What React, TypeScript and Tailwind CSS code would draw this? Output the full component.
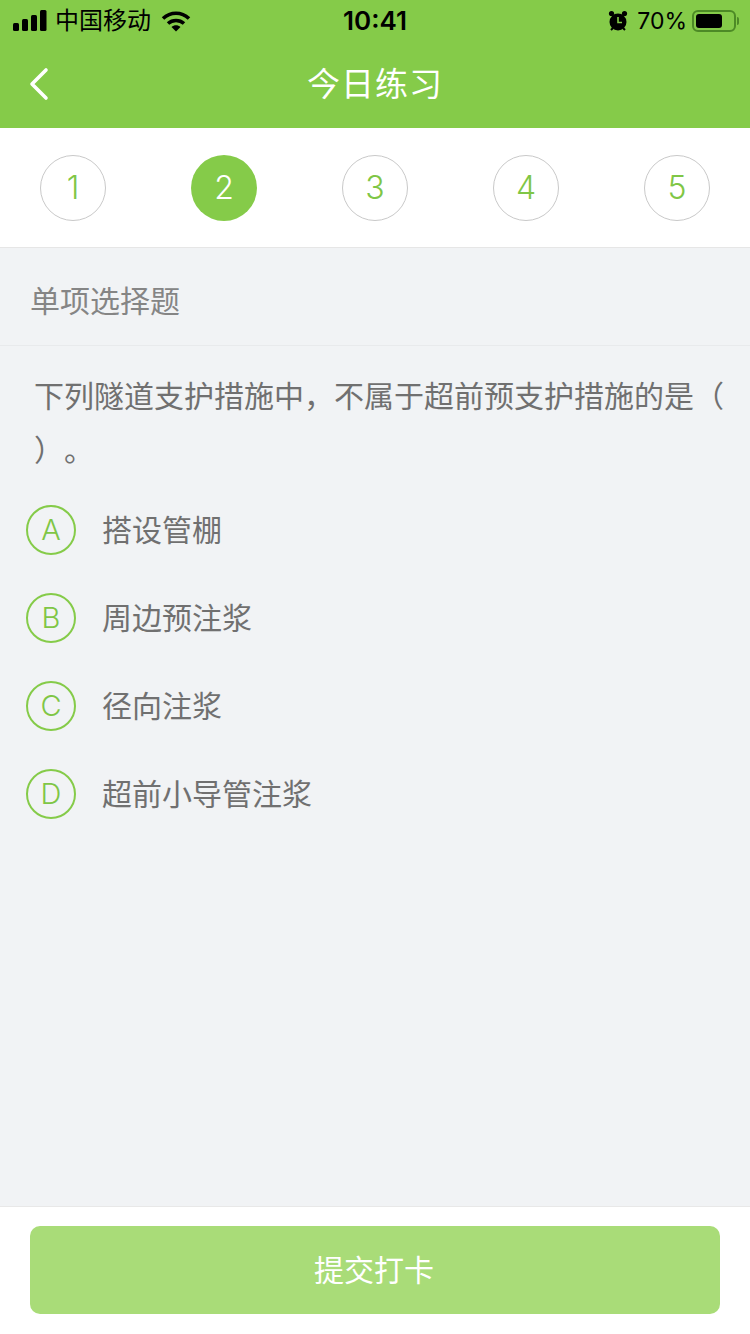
const font = "font-['Inter','Noto_Sans_CJK_SC',sans-serif]";
const steps = [1, 2, 3, 4, 5];
const options = [
  { key: "A", text: "搭设管棚" },
  { key: "B", text: "周边预注浆" },
  { key: "C", text: "径向注浆" },
  { key: "D", text: "超前小导管注浆" },
];

function StatusBar() {
  return (
    <div className="h-[40px] flex items-center justify-between pl-[13px] pr-[11px] pt-[2px] text-black">
      <div className="flex items-center w-[280px]">
        <svg width="34" height="22" viewBox="0 0 34 22" fill="#000">
          <rect x="0" y="13" width="6" height="8" rx="1.5" />
          <rect x="9" y="9" width="6" height="12" rx="1.5" />
          <rect x="18" y="5" width="6" height="16" rx="1.5" />
          <rect x="27" y="0" width="6.5" height="21" rx="1.5" />
        </svg>
        <span className="ml-[8px] text-[24px] leading-none">中国移动</span>
        <svg className="ml-[10px]" width="30" height="22" viewBox="0 0 30 22" fill="none">
          <path d="M2 8.5C9.5 1.5 20.5 1.5 28 8.5" stroke="#000" strokeWidth="3.6" />
          <path d="M7 13.5C11.5 9.5 18.5 9.5 23 13.5" stroke="#000" strokeWidth="3.6" />
          <path d="M10.5 17L15 21.5L19.5 17C17 14.6 13 14.6 10.5 17Z" fill="#000" />
        </svg>
      </div>
      <span className="text-[26px] leading-none font-semibold -ml-[1px] mr-[1px]">10:41</span>
      <div className="flex items-center justify-end w-[280px]">
        <svg width="20" height="22" viewBox="0 0 20 22" fill="#000">
          <circle cx="10" cy="12" r="8.5" />
          <circle cx="3.5" cy="3.5" r="2.6" />
          <circle cx="16.5" cy="3.5" r="2.6" />
          <path d="M10 7V12.5H14" stroke="#85cb49" strokeWidth="1.6" fill="none" />
          <path d="M3 20L5 18M17 20L15 18" stroke="#000" strokeWidth="2" />
        </svg>
        <span className="ml-[9px] text-[23px] leading-none">70%</span>
        <div className="ml-[5px] flex items-center">
          <div className="w-[44px] h-[22px] rounded-[6px] border-2 border-[#4d8a26] p-[2px]">
            <div className="w-[26px] h-full rounded-[3px] bg-black" />
          </div>
          <div className="ml-[1px] w-[2px] h-[8px] rounded-r-sm bg-[#4d8a26]" />
        </div>
      </div>
    </div>
  );
}

export default function App() {
  return (
    <div className={`w-[750px] h-[1334px] flex flex-col bg-[#f1f3f5] ${font}`}>
      <div className="bg-[#85cb49]">
        <StatusBar />
        <div className="relative h-[88px] flex items-center justify-center">
          <svg className="absolute left-[28px] top-[27px]" width="22" height="34" viewBox="0 0 22 34" fill="none">
            <path d="M18 3L4 17L18 31" stroke="#fff" strokeWidth="3.6" strokeLinecap="round" strokeLinejoin="round" />
          </svg>
          <span className="text-[33px] tracking-[1px] text-white leading-none">今日练习</span>
        </div>
      </div>

      <div className="h-[120px] bg-white border-b border-[#e6e6e6] flex items-start justify-between px-[40px] pt-[27px]">
        {steps.map((n) =>
          n === 2 ? (
            <div key={n} className="w-[66px] h-[66px] rounded-full bg-[#85cb49] text-white text-[32px] font-light flex items-center justify-center">
              {n}
            </div>
          ) : (
            <div key={n} className="w-[66px] h-[66px] rounded-full border border-[#c9c9c9] text-[#7fc646] text-[32px] font-light flex items-center justify-center">
              {n}
            </div>
          )
        )}
      </div>

      <div className="h-[98px] border-b border-[#e8eaec] pl-[30px] pt-[10px] flex items-center text-[#858585] text-[30px]">
        单项选择题
      </div>

      <div className="flex-1">
        <p className="pl-[34px] pr-[20px] pt-[23px] text-[30px] leading-[54px] text-[#707070] [text-spacing-trim:space-all]">
          下列隧道支护措施中，不属于超前预支护措施的是（ ）。
        </p>
        <div className="mt-[28px] pl-[26px] flex flex-col gap-[38px]">
          {options.map((o) => (
            <div key={o.key} className="flex items-center">
              <div className="w-[50px] h-[50px] rounded-full border-2 border-[#85cb49] text-[#7fc646] text-[29px] font-light flex items-center justify-center">
                {o.key}
              </div>
              <span className="ml-[26px] text-[30px] leading-none text-[#707070]">{o.text}</span>
            </div>
          ))}
        </div>
      </div>

      <div className="h-[128px] bg-white border-t border-[#e8e8e8] px-[30px] pt-[19px]">
        <button className="w-full h-[88px] rounded-[10px] bg-[#a9dc78] text-white text-[30px] pr-[2px] flex items-center justify-center">
          提交打卡
        </button>
      </div>
    </div>
  );
}
